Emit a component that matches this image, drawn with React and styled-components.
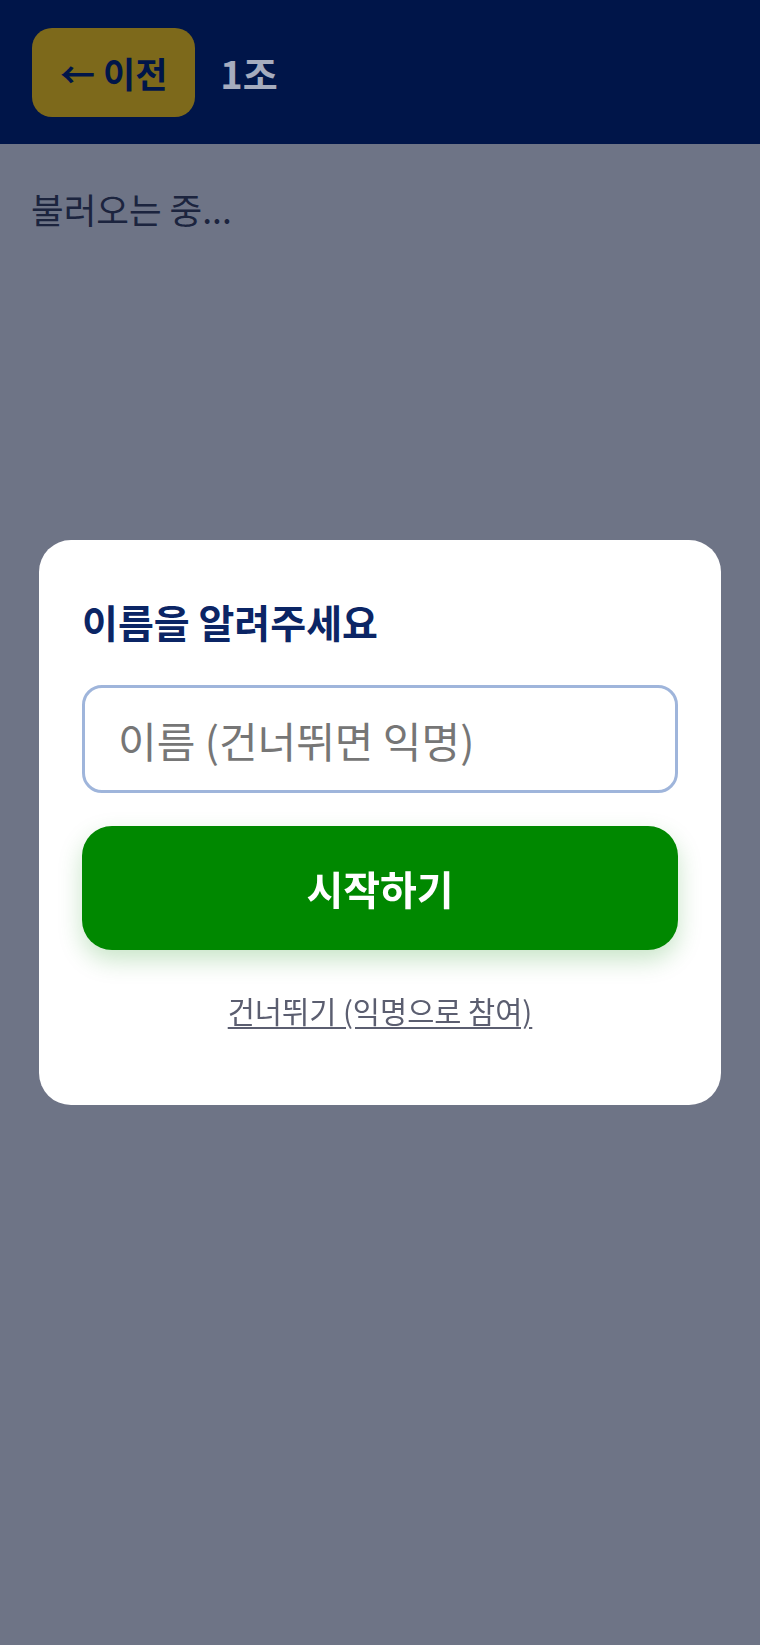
import React from "react";
import styled, { createGlobalStyle } from "styled-components";

const Global = createGlobalStyle`
  html, body, #root { margin: 0; padding: 0; min-height: 100%; height: 100%; }
  body {
    font-family: "Noto Sans CJK KR", "Noto Sans", sans-serif;
    background: #a9a9aa;
  }
  * { box-sizing: border-box; }
`;

const Page = styled.div`
  min-height: 100vh;
  background: #a9a9aa;
`;

const Header = styled.header`
  display: flex;
  align-items: center;
  gap: 25px;
  height: 144px;
  padding: 0 32px;
  background: #00174c;
`;

const BackButton = styled.button`
  font-family: inherit;
  font-size: 35px;
  font-weight: 700;
  line-height: 49px;
  padding: 20px 28px;
  border: none;
  border-radius: 20px;
  background: #c09805;
  color: #00174c;
  cursor: pointer;
`;

const GroupTitle = styled.span`
  font-size: 38px;
  font-weight: 700;
  line-height: 49px;
  color: #ffffff;
`;

const Content = styled.main`
  padding: 41px 31px;
`;

const Loading = styled.p`
  margin: 0;
  font-size: 35.5px;
  line-height: 48px;
  color: #2b2e3b;
`;

const Overlay = styled.div`
  position: fixed;
  inset: 0;
  display: flex;
  align-items: center;
  justify-content: center;
  padding: 0 39px;
  background: rgba(0, 17, 70, 0.35);
`;

const Card = styled.div`
  width: 100%;
  display: flex;
  flex-direction: column;
  padding: 58px 43px 74px;
  background: #ffffff;
  border-radius: 32px;
`;

const Title = styled.h2`
  margin: 0 0 40px;
  font-size: 39px;
  font-weight: 700;
  line-height: 47px;
  color: #0b2565;
`;

const NameInput = styled.input`
  width: 100%;
  height: 108px;
  padding: 0 33px;
  border: 3px solid #9fb5db;
  border-radius: 20px;
  font-family: inherit;
  font-size: 42px;
  color: #222;
  background: #fff;
  outline: none;
  &::placeholder { color: #767676; }
`;

const StartButton = styled.button`
  margin-top: 33px;
  height: 124px;
  border: none;
  border-radius: 30px;
  background: #008800;
  color: #ffffff;
  font-family: inherit;
  font-size: 40px;
  font-weight: 700;
  box-shadow: 0 10px 24px rgba(0, 136, 0, 0.22);
  cursor: pointer;
`;

const SkipLink = styled.button`
  align-self: center;
  margin-top: 40px;
  padding: 0;
  border: none;
  background: none;
  font-family: inherit;
  font-size: 29.5px;
  line-height: 41px;
  color: #5b5e70;
  text-decoration: underline;
  text-underline-offset: 4px;
  cursor: pointer;
`;

export default function App() {
  return (
    <>
      <Global />
      <Page>
        <Header>
          <BackButton>← 이전</BackButton>
          <GroupTitle>1조</GroupTitle>
        </Header>
        <Content>
          <Loading>불러오는 중...</Loading>
        </Content>
      </Page>
      <Overlay>
        <Card>
          <Title>이름을 알려주세요</Title>
          <NameInput placeholder="이름 (건너뛰면 익명)" />
          <StartButton>시작하기</StartButton>
          <SkipLink>건너뛰기 (익명으로 참여)</SkipLink>
        </Card>
      </Overlay>
    </>
  );
}
